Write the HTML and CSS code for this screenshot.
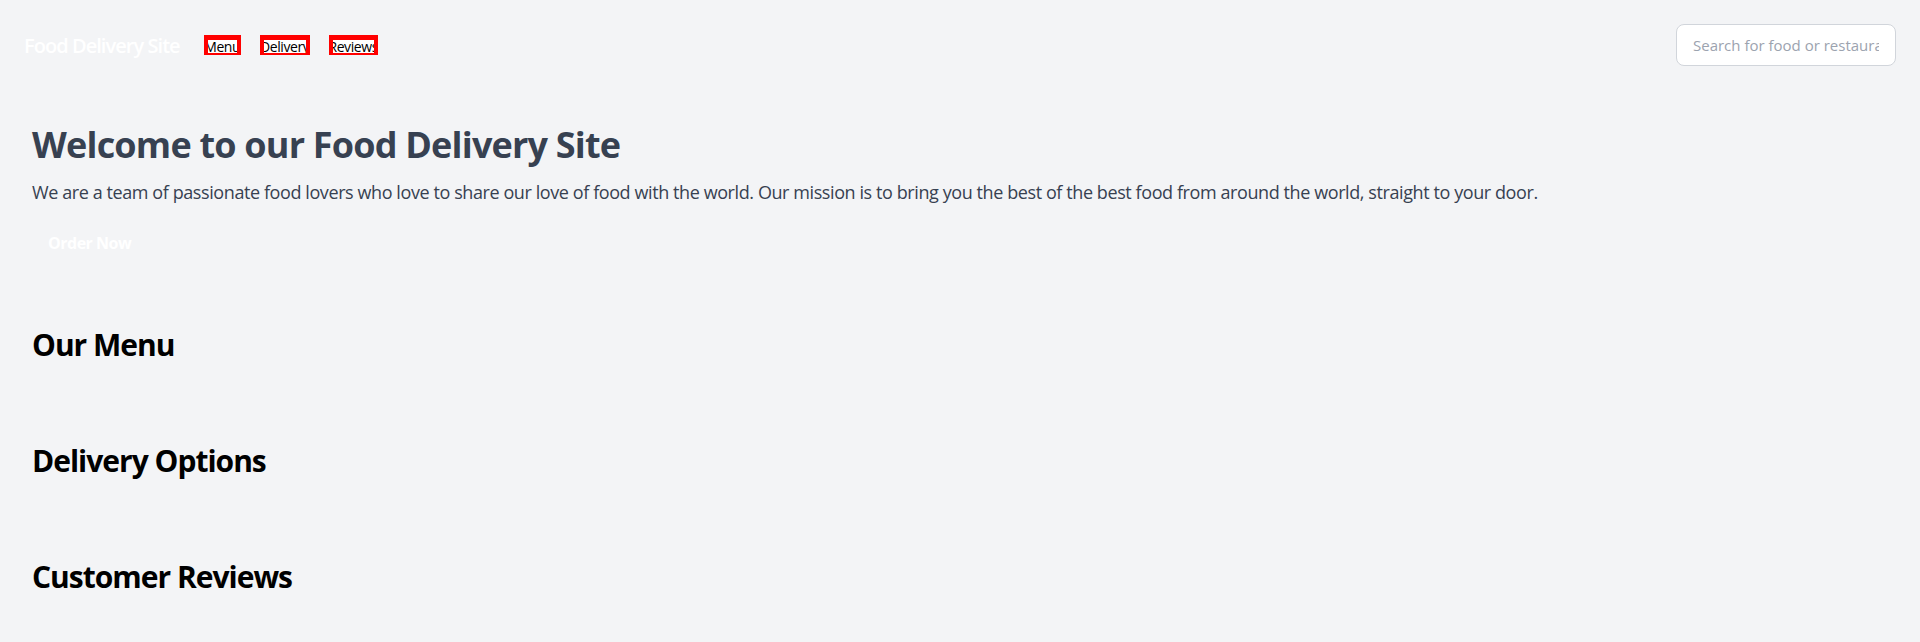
FILE: index.html
```html
<!DOCTYPE html>
<html lang="en">
<head>
<meta charset="utf-8">
<title>Food Delivery Site</title>
<link rel="stylesheet" href="styles.css">
</head>
<body>
<header class="site-header">
  <div class="brand-row">
    <span class="logo">Food Delivery Site</span>
    <nav class="nav">
      <a class="nav-link nav-menu" href="#menu"><span>Menu</span></a>
      <a class="nav-link nav-delivery" href="#delivery"><span>Delivery</span></a>
      <a class="nav-link nav-reviews" href="#reviews"><span>Reviews</span></a>
    </nav>
  </div>
  <input class="search" type="text" placeholder="Search for food or restaurants">
</header>
<main>
  <section class="hero">
    <h1 class="hero-title">Welcome to our Food Delivery Site</h1>
    <p class="hero-text">We are a team of passionate food lovers who love to share our love of food with the world. Our mission is to bring you the best of the best food from around the world, straight to your door.</p>
    <button class="order-btn" type="button">Order Now</button>
  </section>
  <section class="block" id="menu">
    <h2 class="block-title">Our Menu</h2>
  </section>
  <section class="block" id="delivery">
    <h2 class="block-title">Delivery Options</h2>
  </section>
  <section class="block" id="reviews">
    <h2 class="block-title">Customer Reviews</h2>
  </section>
</main>
</body>
</html>
```
FILE: styles.css
```css
* { box-sizing: border-box; }
html, body { margin: 0; padding: 0; }
body {
  background: #f3f4f6;
  font-family: "Open Sans", "Noto Sans", sans-serif;
  color: #000;
}
.site-header {
  display: flex;
  justify-content: space-between;
  align-items: center;
  padding: 24px 24px;
}
.brand-row {
  display: flex;
  align-items: center;
  gap: 24px;
}
.logo {
  color: #fff;
  font-size: 20px;
  font-weight: 600;
  letter-spacing: -0.95px;
}
.nav {
  display: flex;
  gap: 19px;
  align-items: center;
}
.nav-link {
  display: flex;
  justify-content: center;
  align-items: center;
  height: 20px;
  border-style: solid;
  border-color: #ff0000;
  border-width: 5px 4px 2px 4px;
  background: #ffffff;
  overflow: hidden;
  white-space: nowrap;
  color: #000;
  text-decoration: none;
  font-size: 14px;
  line-height: 13px;
  letter-spacing: -0.4px;
}
.nav-link span { flex: none; }
.nav-menu { width: 37px; }
.nav-delivery { width: 50px; }
.nav-reviews { width: 49px; }
.search {
  width: 220px;
  height: 42px;
  border: 1px solid #d1d5db;
  border-radius: 8px;
  background: #fff;
  padding: 0 16px;
  font-family: "Open Sans", sans-serif;
  font-size: 15px;
  color: #111827;
  outline: none;
}
.search::placeholder { color: #9ca3af; }
.hero {
  padding: 35px 32px 32px;
}
.hero-title {
  margin: 0 0 13px;
  font-size: 36px;
  line-height: 40px;
  font-weight: 700;
  color: #374151;
  letter-spacing: -0.8px;
}
.hero-text {
  margin: 0 0 17px;
  font-size: 18px;
  line-height: 28px;
  color: #374151;
  letter-spacing: -0.41px;
}
.order-btn {
  border: 0;
  background: transparent;
  color: #fff;
  font-family: "Open Sans", sans-serif;
  font-size: 16px;
  font-weight: 700;
  line-height: 24px;
  padding: 8px 16px;
  letter-spacing: -0.5px;
}
.block {
  padding: 32px 32px 48px;
}
.block-title {
  margin: 0;
  font-size: 30px;
  line-height: 36px;
  font-weight: 700;
  color: #000;
  letter-spacing: -1px;
}
```
